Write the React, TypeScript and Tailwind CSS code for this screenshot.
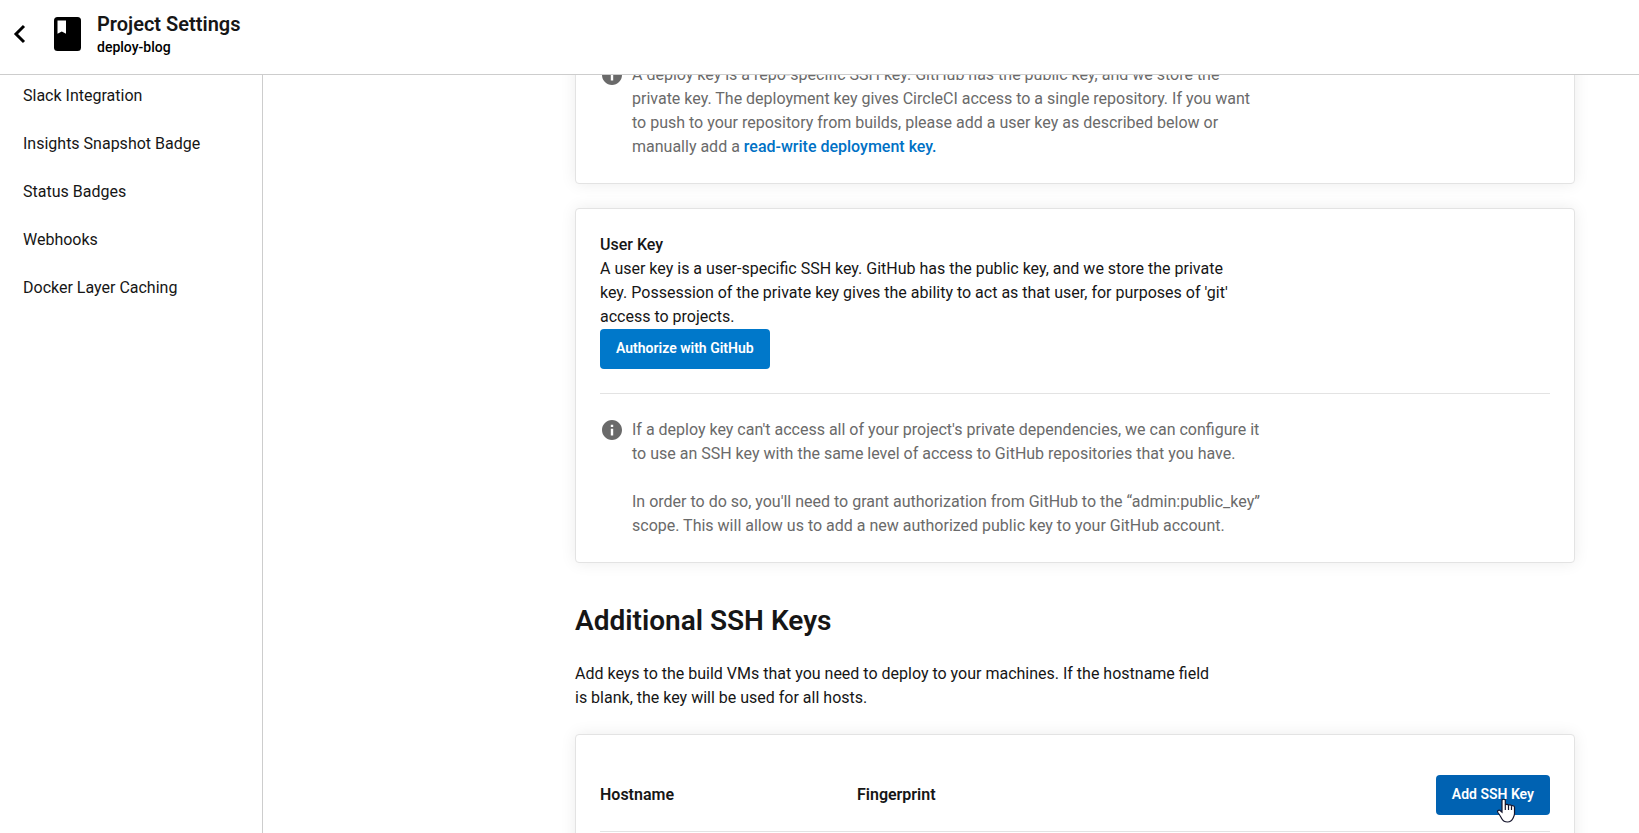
import type { ReactNode } from "react";

const navItems = ["Slack Integration", "Insights Snapshot Badge", "Status Badges", "Webhooks", "Docker Layer Caching"];

function InfoIcon() {
  return (
    <svg viewBox="0 0 24 24" className="size-6 shrink-0 fill-[#6a6a6a]" aria-hidden="true">
      <path d="M12 2C6.48 2 2 6.48 2 12s4.48 10 10 10 10-4.48 10-10S17.52 2 12 2zm1.200 15.500h-2.400v-6.800h2.400v6.800zm0-8.500h-2.400V6.700h2.400v2.300z" />
    </svg>
  );
}

function BackIcon() {
  return (
    <svg viewBox="0 0 24 24" className="size-6" fill="none" stroke="black" strokeWidth="3" aria-hidden="true">
      <path d="M17 4L9 12l8 8" />
    </svg>
  );
}

function RepoIcon() {
  return (
    <svg viewBox="0 0 27 34" className="h-[34px] w-[27px]" aria-hidden="true">
      <rect width="27" height="34" rx="3.5" fill="black" />
      <path d="M3.500 3.500h8.500v13.200l-4.200-2.200-4.300 2.200z" fill="white" />
    </svg>
  );
}

function HandCursor() {
  return (
    <svg viewBox="0 0 19 25" className="pointer-events-none absolute top-6 left-[61px] h-[25px] w-[19px]" aria-hidden="true">
      <path
        d="M5 1.200C5-.1 8.300-.1 8.300 1.200V6c.6-1.100 3-.8 3.200.3.600-.8 2.800-.5 3 .7.700-.8 3-.4 3 1.300v6.500c0 1.700-.8 3-1.500 4.500-1 2.200-3 3.700-5.500 3.700-2.700 0-4.500-1-5.700-3.200-1.300-2.300-2.300-4.300-3.900-6.300-1.200-1.600 1-3 2.200-2L5 13.200z"
        fill="white"
        stroke="#14142b"
        strokeWidth="1.200"
      />
      <path d="M8.300 6v5M11.500 6.500v4.500M14.500 7.500v3.500" stroke="#14142b" strokeWidth="1.200" />
    </svg>
  );
}

function Card({ children }: { children: ReactNode }) {
  return <section className="rounded border border-[#e3e3e3] bg-white p-6 shadow-[0_0_16px_rgba(0,0,0,0.08)]">{children}</section>;
}

function Info({ children }: { children: ReactNode }) {
  return (
    <div className="flex gap-2 text-[#6a6a6a]">
      <InfoIcon />
      <div className="max-w-[632px] space-y-6">{children}</div>
    </div>
  );
}

export default function App() {
  return (
    <div className="flex h-screen flex-col overflow-hidden bg-white font-['Roboto',sans-serif] text-base leading-6 text-[#161616]">
      <header className="z-10 flex h-[75px] shrink-0 items-center border-b border-[#cdcdcd] bg-white pb-1.5 pl-[7px]">
        <button type="button" aria-label="Back">
          <BackIcon />
        </button>
        <div className="ml-[23px]">
          <RepoIcon />
        </div>
        <div className="ml-4 pt-0.5">
          <h1 className="text-xl leading-6 font-semibold">Project Settings</h1>
          <p className="text-sm leading-[22px] font-medium text-black">deploy-blog</p>
        </div>
      </header>
      <div className="flex min-h-0 flex-1">
        <nav className="w-[263px] shrink-0 border-r border-[#cdcdcd]" aria-label="Settings">
          <ul className="-mt-[3px]">
            {navItems.map((item) => (
              <li key={item}>
                <a href="#" className="block py-3 pl-[23px]">
                  {item}
                </a>
              </li>
            ))}
          </ul>
        </nav>
        <main className="min-w-0 flex-1 overflow-hidden pr-16 pl-78">
          <div className="-mt-[37px] flex flex-col gap-6">
            <Card>
              <Info>
                <p>
                  A deploy key is a repo-specific SSH key. GitHub has the public key, and we store the private key. The
                  deployment key gives CircleCI access to a single repository. If you want to push to your repository
                  from builds, please add a user key as described below or manually add a{" "}
                  <a href="#" className="font-medium text-[#0071c5]">
                    read-write deployment key.
                  </a>
                </p>
              </Info>
            </Card>
            <Card>
              <h2 className="font-medium">User Key</h2>
              <p className="max-w-[640px]">
                A user key is a user-specific SSH key. GitHub has the public key, and we store the private key.
                Possession of the private key gives the ability to act as that user, for purposes of 'git' access to
                projects.
              </p>
              <button type="button" className="flex h-10 items-center rounded bg-[#0078ca] px-4 pb-0.5 text-sm font-semibold text-white">
                Authorize with GitHub
              </button>
              <hr className="my-6 border-[#e3e3e3]" />
              <Info>
                <p>
                  If a deploy key can't access all of your project's private dependencies, we can configure it to use an
                  SSH key with the same level of access to GitHub repositories that you have.
                </p>
                <p>
                  In order to do so, you'll need to grant authorization from GitHub to the “admin:public_key” scope.
                  This will allow us to add a new authorized public key to your GitHub account.
                </p>
              </Info>
            </Card>
            <div className="pt-4">
              <h2 className="text-[28px] leading-9 font-semibold">Additional SSH Keys</h2>
              <p className="mt-[23px] max-w-[640px]">
                Add keys to the build VMs that you need to deploy to your machines. If the hostname field is blank, the
                key will be used for all hosts.
              </p>
            </div>
            <Card>
              <table className="w-full border-collapse text-left">
                <thead>
                  <tr className="border-b border-[#e3e3e3]">
                    <th className="w-[257px] p-0 font-semibold">Hostname</th>
                    <th className="p-0 font-semibold">Fingerprint</th>
                    <th className="w-[114px] px-0 py-4">
                      <div className="relative">
                        <button type="button" className="flex h-10 w-full items-center rounded bg-[#0062b2] px-4 pb-0.5 text-sm font-semibold whitespace-nowrap text-white">
                          Add SSH Key
                        </button>
                        <HandCursor />
                      </div>
                    </th>
                  </tr>
                </thead>
              </table>
            </Card>
          </div>
        </main>
      </div>
    </div>
  );
}
